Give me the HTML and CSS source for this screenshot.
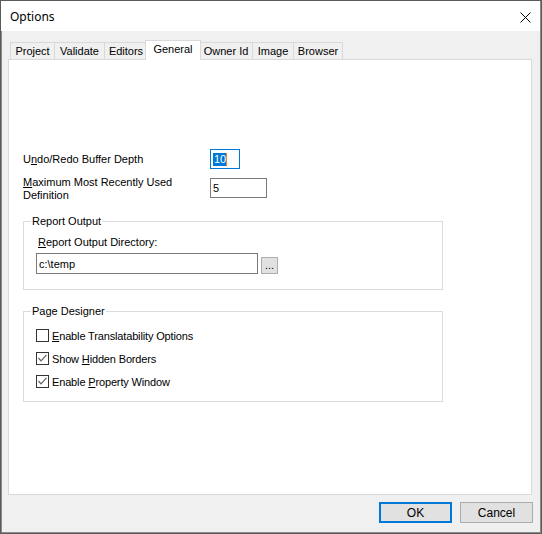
FILE: index.html
```html
<!DOCTYPE html>
<html>
<head>
<meta charset="utf-8">
<title>Options</title>
<link rel="stylesheet" href="styles.css">
</head>
<body>
<div class="window">
  <div class="titlebar">
    <span class="title">Options</span>
    <svg class="close" width="11" height="11" viewBox="0 0 11 11"><path d="M0.5 0.5 L10.5 10.5 M10.5 0.5 L0.5 10.5" stroke="#000" stroke-width="1" fill="none"/></svg>
  </div>
  <div class="body">
    <div class="tabs">
      <div class="tab tab-project">Project</div>
      <div class="tab tab-validate">Validate</div>
      <div class="tab tab-editors">Editors</div>
      <div class="tab tab-general active">General</div>
      <div class="tab tab-owner">Owner Id</div>
      <div class="tab tab-image">Image</div>
      <div class="tab tab-browser last">Browser</div>
    </div>
    <div class="panel">
      <div class="row row-undo">
        <span class="row-label">U<u>n</u>do/Redo Buffer Depth</span>
        <div class="edit edit-focus"><span class="sel">10</span><span class="caret"></span></div>
      </div>
      <div class="row row-max">
        <span class="row-label multi"><u>M</u>aximum Most Recently Used<br>Definition</span>
        <div class="edit edit-max">5</div>
      </div>
      <fieldset class="group group-report">
        <legend><span>Report Output</span></legend>
        <span class="field-label"><u>R</u>eport Output Directory:</span>
        <div class="path-row">
          <div class="edit edit-path">c:\temp</div>
          <div class="browse">...</div>
        </div>
      </fieldset>
      <fieldset class="group group-designer">
        <legend><span>Page Designer</span></legend>
        <div class="check-row first">
          <span class="box"></span>
          <span class="check-label"><u>E</u>nable Translatability Options</span>
        </div>
        <div class="check-row">
          <span class="box"><svg width="11" height="11" viewBox="0 0 11 11"><polyline points="1.5,5 4,7.8 9.5,1.8" fill="none" stroke="#606060" stroke-width="1.2"/></svg></span>
          <span class="check-label">Show <u>H</u>idden Borders</span>
        </div>
        <div class="check-row">
          <span class="box"><svg width="11" height="11" viewBox="0 0 11 11"><polyline points="1.5,5 4,7.8 9.5,1.8" fill="none" stroke="#606060" stroke-width="1.2"/></svg></span>
          <span class="check-label">Enable <u>P</u>roperty Window</span>
        </div>
      </fieldset>
    </div>
    <div class="buttons">
      <button class="btn btn-default">OK</button>
      <button class="btn">Cancel</button>
    </div>
  </div>
</div>
</body>
</html>
```
FILE: styles.css
```css
html, body {
  margin: 0;
  padding: 0;
  background: #f0f0f0;
}

.window {
  width: 542px;
  height: 534px;
  box-sizing: border-box;
  border: 1px solid #5a5a5a;
  box-shadow: inset -1px -1px 0 #8a8a8a, inset 1px 0 0 #8a8a8a;
  background: #f0f0f0;
  display: flex;
  flex-direction: column;
  font-family: "Liberation Sans", Arial, sans-serif;
  font-size: 11px;
  color: #000;
}

.titlebar {
  height: 30px;
  flex: none;
  background: #fff;
  display: flex;
  align-items: center;
  justify-content: space-between;
  padding: 0 9px 0 9px;
  margin: 0 1px 0 0;
}

.title {
  font-family: "Noto Sans", "Liberation Sans", sans-serif;
  font-size: 12px;
  color: #000;
}

.close {
  display: block;
  margin-top: 2px;
}

.body {
  flex: 1;
  display: flex;
  flex-direction: column;
  padding: 9px 8px 0 7px;
}

.tabs {
  display: flex;
  align-items: flex-end;
  height: 19px;
  padding-left: 2px;
}

.tab {
  height: 17px;
  box-sizing: border-box;
  border-top: 1px solid #d9d9d9;
  border-left: 1px solid #d9d9d9;
  display: flex;
  align-items: center;
  justify-content: center;
  padding-top: 0;
  white-space: nowrap;
}

.tab.last {
  border-right: 1px solid #d9d9d9;
}

.tab.active {
  height: 20px;
  margin: 0 -2px -1px -2px;
  background: #fff;
  border-right: 1px solid #d9d9d9;
  position: relative;
  z-index: 1;
  padding-top: 0;
  padding-bottom: 4px;
}

.tab-project { width: 44px; }
.tab-validate { width: 50px; }
.tab-editors { width: 43px; }
.tab-general { width: 56px; }
.tab-owner { width: 53px; }
.tab-image { width: 41px; }
.tab-browser { width: 50px; }

.panel {
  width: 524px;
  height: 436px;
  box-sizing: border-box;
  border: 1px solid #d9d9d9;
  background: #fff;
  padding: 89px 0 0 14px;
}

.row {
  display: flex;
}

.row-undo {
  align-items: center;
  height: 20px;
}

.row-max {
  margin-top: 9px;
  align-items: flex-start;
}

.row-label {
  width: 187px;
  flex: none;
  line-height: 13px;
}

.row-label.multi {
  margin-top: -2px;
}

.edit {
  box-sizing: border-box;
  height: 20px;
  border: 1px solid #7a7a7a;
  background: #fff;
  padding-left: 2px;
  display: flex;
  align-items: center;
  flex: none;
}

.edit-focus {
  width: 30px;
  border-color: #0078d7;
}

.sel {
  background: #0078d7;
  color: #fff;
  line-height: 13px;
  padding: 0 0 0 1px;
}

.caret {
  width: 1px;
  height: 13px;
  background: #f08030;
}

.edit-max {
  width: 57px;
}

.group {
  width: 420px;
  box-sizing: border-box;
  border: 1px solid #dcdcdc;
  margin: 0;
  padding: 0 12px 15px 12px;
  min-width: 0;
}

.group legend {
  padding: 0 1px;
  margin-left: -5px;
  line-height: 13px;
}

.group-report {
  margin-top: 13px;
}

.field-label {
  display: block;
  margin: 8px 0 0 2px;
  line-height: 13px;
}

.path-row {
  display: flex;
  align-items: flex-end;
  gap: 3px;
  margin-top: 4px;
}

.edit-path {
  width: 222px;
  height: 21px;
}

.browse {
  width: 17px;
  height: 17px;
  box-sizing: border-box;
  border: 1px solid #adadad;
  background: #e1e1e1;
  display: flex;
  align-items: flex-end;
  justify-content: center;
  line-height: 13px;
  padding-bottom: 1px;
}

.group-designer {
  margin-top: 15px;
  padding-bottom: 8px;
}

.check-row {
  display: flex;
  align-items: center;
  gap: 3px;
  height: 23px;
}

.check-row.first {
  margin-top: 6px;
}

.check-label {
  letter-spacing: -0.15px;
}

.box {
  width: 13px;
  height: 13px;
  box-sizing: border-box;
  border: 1px solid #333;
  background: #fff;
  display: flex;
  align-items: center;
  justify-content: center;
  flex: none;
}

.box svg {
  display: block;
}

.buttons {
  display: flex;
  justify-content: flex-end;
  gap: 8px;
  margin-top: 7px;
}

.btn {
  width: 73px;
  height: 21px;
  box-sizing: border-box;
  border: 1px solid #adadad;
  background: #e1e1e1;
  font-family: inherit;
  font-size: 12px;
  color: #000;
  padding: 0;
  margin: 0;
  display: flex;
  align-items: center;
  justify-content: center;
}

.btn-default {
  border: 2px solid #0078d7;
}
```
